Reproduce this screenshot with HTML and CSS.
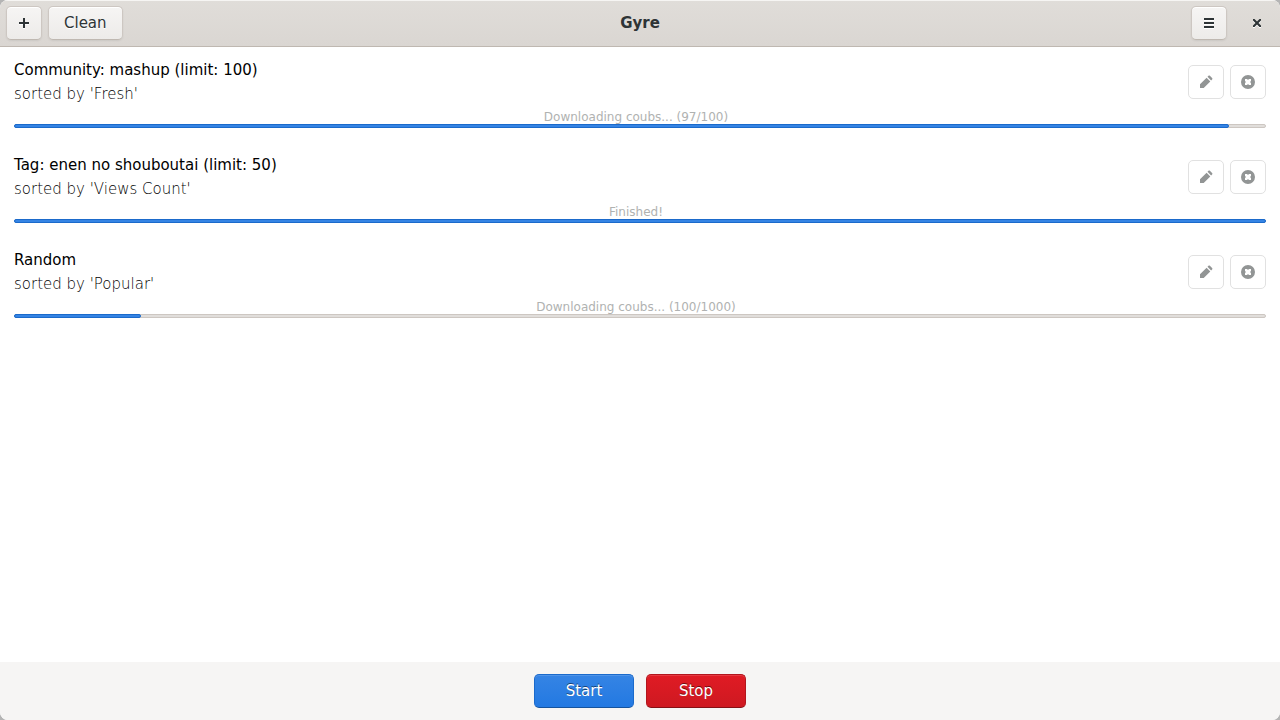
FILE: index.html
```html
<!DOCTYPE html>
<html lang="en">
<head>
<meta charset="utf-8">
<title>Gyre</title>
<link rel="stylesheet" href="styles.css">
</head>
<body>
<svg class="symbols" aria-hidden="true">
  <symbol id="pencil" viewBox="0 0 16 16"><path d="M2 14v-3.700l6.600-6.600 3.700 3.700L5.700 14zM9.500 2.800l1-1c.5-.5.900-.5 1.400 0l2.200 2.200c.5.5.5.900 0 1.400l-1 1z"/></symbol>
  <symbol id="remove" viewBox="0 0 16 16"><path fill-rule="evenodd" d="M8 1a7 7 0 1 0 0 14A7 7 0 0 0 8 1zM5 5h2l1 1 1-1h2v2l-1 1 1 1v2H9l-1-1-1 1H5V9l1-1-1-1z"/></symbol>
</svg>
<div class="window">
  <header class="headerbar">
    <div class="group">
      <button class="button icon" aria-label="Add"><svg viewBox="0 0 16 16"><path d="M7 3h2v4h4v2H9v4H7V9H3V7h4z"/></svg></button>
      <button class="button">Clean</button>
    </div>
    <h1 class="title">Gyre</h1>
    <div class="group end">
      <button class="button icon" aria-label="Menu"><svg viewBox="0 0 16 16"><path d="M3 3h10v2H3zM3 7h10v2H3zM3 11h10v2H3z"/></svg></button>
      <button class="close" aria-label="Close"><svg viewBox="0 0 16 16"><path d="M4 4h1.500L8 6.500 10.500 4H12v1.500L9.500 8l2.500 2.500V12h-1.500L8 9.500 5.500 12H4v-1.500L6.500 8 4 5.500z"/></svg></button>
    </div>
  </header>
  <main class="list">
    <section class="item">
      <div class="top">
        <div class="info"><h2 class="name">Community: mashup (limit: 100)</h2><p class="sort">sorted by 'Fresh'</p></div>
        <div class="actions">
          <button class="action" aria-label="Edit"><svg><use href="#pencil"/></svg></button>
          <button class="action" aria-label="Remove"><svg><use href="#remove"/></svg></button>
        </div>
      </div>
      <p class="status">Downloading coubs... (97/100)</p>
      <div class="track"><div class="fill" style="width:97%"></div></div>
    </section>
    <section class="item">
      <div class="top">
        <div class="info"><h2 class="name">Tag: enen no shouboutai (limit: 50)</h2><p class="sort">sorted by 'Views Count'</p></div>
        <div class="actions">
          <button class="action" aria-label="Edit"><svg><use href="#pencil"/></svg></button>
          <button class="action" aria-label="Remove"><svg><use href="#remove"/></svg></button>
        </div>
      </div>
      <p class="status">Finished!</p>
      <div class="track"><div class="fill" style="width:100%"></div></div>
    </section>
    <section class="item">
      <div class="top">
        <div class="info"><h2 class="name">Random</h2><p class="sort">sorted by 'Popular'</p></div>
        <div class="actions">
          <button class="action" aria-label="Edit"><svg><use href="#pencil"/></svg></button>
          <button class="action" aria-label="Remove"><svg><use href="#remove"/></svg></button>
        </div>
      </div>
      <p class="status">Downloading coubs... (100/1000)</p>
      <div class="track"><div class="fill" style="width:10%"></div></div>
    </section>
  </main>
  <footer class="footer">
    <button class="run start">Start</button>
    <button class="run stop">Stop</button>
  </footer>
</div>
</body>
</html>
```
FILE: styles.css
```css
* { box-sizing: border-box; }
body { margin: 0; background: #b4b4b4; font: 15px/24px "DejaVu Sans", sans-serif; color: #2e3436; }
h1, h2, p { margin: 0; font-size: inherit; font-weight: inherit; }
button { font: inherit; color: inherit; padding: 0; }
svg { display: block; width: 16px; height: 16px; fill: currentColor; }
.symbols { display: none; }
.window { display: flex; flex-direction: column; min-height: 100vh; background: #fff; border-radius: 8px; overflow: hidden; }

.headerbar { display: grid; grid-template-columns: 1fr auto 1fr; align-items: center; padding: 6px; border-bottom: 1px solid #bfb8b1; background: linear-gradient(#e0ddd9, #dad6d2); box-shadow: inset 0 1px #f6f5f3; }
.group { display: flex; gap: 6px; }
.end { justify-content: flex-end; }
.headerbar .title { font-weight: bold; }
.button { height: 34px; padding: 0 15px; border: 1px solid #cdc7c2; border-bottom-color: #bfb8b1; border-radius: 5px; background: linear-gradient(#f6f5f4, #edebe9); box-shadow: inset 0 1px #fff, 0 1px 2px rgba(0, 0, 0, .07); text-shadow: 0 1px #fff; }
.icon { width: 36px; padding: 0 9px; }
.icon svg, .close svg { filter: drop-shadow(0 1px #fff); }
.close { width: 34px; height: 34px; margin-left: 7px; padding: 0 9px; border: 0; background: none; }

.list { flex: 1; }
.item { padding: 11px 14px 14px; }
.top { display: flex; justify-content: space-between; align-items: center; }
.name { color: #000; }
.sort { color: #000; font-weight: 200; }
.actions { display: flex; gap: 6px; }
.action { display: flex; align-items: center; justify-content: center; width: 36px; height: 34px; border: 1px solid #e1e1e1; border-radius: 5px; background: #fff; color: #929595; }
.status { padding-right: 8px; font-size: 12px; line-height: 22px; height: 18px; text-align: center; color: #b0b2b1; }
.track { position: relative; height: 4px; border: 1px solid #cdc7c2; border-radius: 2px; background: #e1dedb; }
.fill { box-sizing: content-box; height: 2px; margin: -1px; border: 1px solid #1b6acb; border-radius: 2px; background: #3584e4; }

.footer { display: flex; justify-content: center; gap: 12px; padding: 12px; background: #f6f5f4; }
.run { width: 100px; height: 34px; border: 1px solid; border-radius: 5px; color: #fff; text-shadow: 0 -1px rgba(0, 0, 0, .5); }
.start { border-color: #1b6acb #1b6acb #15539e; background: linear-gradient(#3584e4, #2379e2); box-shadow: inset 0 1px #4f94e8; }
.stop { border-color: #b2161d #b2161d #851015; background: linear-gradient(#e01b24, #ce1921); box-shadow: inset 0 1px #e63a42; }
```
